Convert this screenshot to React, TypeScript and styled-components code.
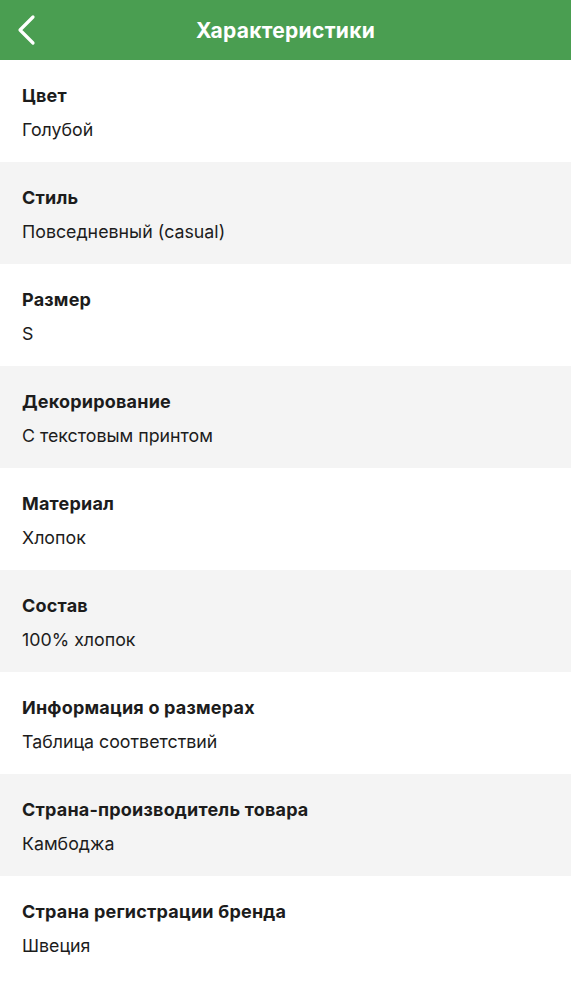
import React from 'react';
import styled, { createGlobalStyle } from 'styled-components';

const GlobalStyle = createGlobalStyle`
  html, body {
    margin: 0;
    padding: 0;
    background: #fff;
  }
  body {
    font-family: Inter, 'Noto Sans', sans-serif;
    color: #1c1c1c;
  }
`;

const Page = styled.div`
  width: 571px;
  min-height: 1000px;
  background: #fff;
`;

const Header = styled.header`
  height: 60px;
  background: #4a9e51;
  display: grid;
  grid-template-columns: 60px 1fr 60px;
  align-items: center;
`;

const BackButton = styled.button`
  background: none;
  border: none;
  padding: 0 0 0 16px;
  height: 60px;
  display: flex;
  align-items: center;
  cursor: pointer;
`;

const Title = styled.h1`
  margin: 0;
  text-align: center;
  color: #fff;
  font-size: 21px;
  font-weight: 700;
  letter-spacing: 0.3px;
`;

const List = styled.dl`
  margin: 0;
`;

const Row = styled.div<{ $shaded: boolean }>`
  height: 102px;
  box-sizing: border-box;
  padding: 24px 22px 0;
  background: ${p => (p.$shaded ? '#f4f4f4' : '#fff')};
`;

const Label = styled.dt`
  font-size: 18px;
  font-weight: 700;
  line-height: 23px;
  letter-spacing: 0.2px;
`;

const Value = styled.dd`
  margin: 11px 0 0;
  font-size: 17.8px;
  font-weight: 400;
  line-height: 23px;
`;

const specs: [string, string][] = [
  ['Цвет', 'Голубой'],
  ['Стиль', 'Повседневный (casual)'],
  ['Размер', 'S'],
  ['Декорирование', 'С текстовым принтом'],
  ['Материал', 'Хлопок'],
  ['Состав', '100% хлопок'],
  ['Информация о размерах', 'Таблица соответствий'],
  ['Страна-производитель товара', 'Камбоджа'],
  ['Страна регистрации бренда', 'Швеция'],
];

const App: React.FC = () => {
  return (
    <Page>
      <GlobalStyle />
      <Header>
        <BackButton aria-label="Назад">
          <svg width="22" height="32" viewBox="0 0 22 32" fill="none">
            <path
              d="M17 3 L4 16 L17 29"
              stroke="#fff"
              strokeWidth="3.2"
              strokeLinecap="round"
              strokeLinejoin="round"
            />
          </svg>
        </BackButton>
        <Title>Характеристики</Title>
        <span />
      </Header>
      <List>
        {specs.map(([label, value], i) => (
          <Row key={label} $shaded={i % 2 === 1}>
            <Label>{label}</Label>
            <Value>{value}</Value>
          </Row>
        ))}
      </List>
    </Page>
  );
};

export default App;
